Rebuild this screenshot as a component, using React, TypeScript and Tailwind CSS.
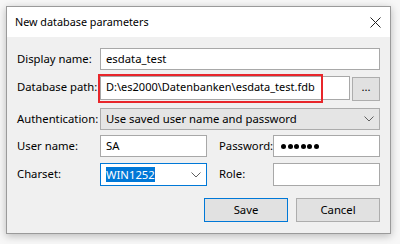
import React from "react";

const font = { fontFamily: '"Noto Sans", "Open Sans", sans-serif' };

function Chevron() {
  return (
    <svg width="10" height="6" viewBox="0 0 10 6" className="shrink-0">
      <path d="M0.5 0.5 L5 5 L9.5 0.5" fill="none" stroke="#606060" strokeWidth="1" />
    </svg>
  );
}

export default function App() {
  return (
    <div className="w-[400px] h-[244px] bg-[#f7f7f7] pt-[6px] pl-[6px] text-[11.3px] text-black whitespace-nowrap" style={font}>
      <div className="w-[385px] h-[228px] border border-[#9a9a9a] bg-[#f0f0f0] shadow-[0_2px_8px_rgba(0,0,0,0.25)] flex flex-col">
        <div className="h-[30px] bg-white flex items-center justify-between pl-[8px] pr-[9px]">
          <span className="leading-none text-[10.8px]">New database parameters</span>
          <svg width="11" height="11" viewBox="0 0 11 11">
            <path d="M0.5 0.5 L10.5 10.5 M10.5 0.5 L0.5 10.5" stroke="#222" strokeWidth="1" />
          </svg>
        </div>
        <div className="flex flex-col pl-[10px] pr-[10px]">
          {/* Display name */}
          <div className="mt-[11px] h-[22px] flex items-center">
            <span className="w-[83px] shrink-0">Display name:</span>
            <div className="flex-1 h-full border border-[#a8a8a8] bg-white flex items-center px-[5px]">esdata_test</div>
          </div>
          {/* Database path */}
          <div className="mt-[3px] h-[29px] flex items-center">
            <span className="w-[83px] shrink-0">Database path:</span>
            <div className="relative w-[250px] h-[24px] border border-[#a8a8a8] bg-white flex items-center px-[5px] text-[11px]">
              D:\es2000\Datenbanken\esdata_test.fdb
              <div className="absolute left-[-3px] top-[-3px] w-[225px] h-[29px] border-2 border-[#e8262b]" />
            </div>
            <div className="ml-[2px] mt-[3px] w-[28px] h-[24px] border border-[#adadad] bg-[#e1e1e1] flex items-center justify-center leading-none pb-[4px]">...</div>
          </div>
          {/* Authentication */}
          <div className="mt-[6px] h-[22px] flex items-center">
            <span className="w-[83px] shrink-0">Authentication:</span>
            <div className="flex-1 h-full border border-[#acacac] bg-[#e5e5e5] flex items-center justify-between pl-[5px] pr-[5px]">
              <span>Use saved user name and password</span>
              <Chevron />
            </div>
          </div>
          {/* User / Password */}
          <div className="mt-[5px] h-[22px] flex items-center">
            <span className="w-[83px] shrink-0">User name:</span>
            <div className="w-[107px] h-full border border-[#a8a8a8] bg-white flex items-center px-[5px]">SA</div>
            <span className="ml-[12px] w-[54px] shrink-0">Password:</span>
            <div className="flex-1 h-full border border-[#a8a8a8] bg-white flex items-center pl-[7px] gap-[1.5px]">
              {[0, 1, 2, 3, 4, 5].map((i) => (
                <span key={i} className="w-[5px] h-[5px] rounded-full bg-black" />
              ))}
            </div>
          </div>
          {/* Charset / Role */}
          <div className="mt-[6px] h-[23px] flex items-center">
            <span className="w-[83px] shrink-0">Charset:</span>
            <div className="w-[107px] h-full border border-[#0078d7] bg-white flex items-center justify-between pl-[5px] pr-[5px]">
              <span className="bg-[#0078d7] text-white leading-[15px]">WIN1252</span>
              <Chevron />
            </div>
            <span className="ml-[12px] w-[54px] shrink-0">Role:</span>
            <div className="flex-1 h-full border border-[#a8a8a8] bg-white" />
          </div>
          {/* Buttons */}
          <div className="mt-[12px] h-[24px] flex justify-end gap-[8px]">
            <div className="w-[84px] h-full border border-[#0078d7] bg-[#e1e1e1] flex items-center justify-center">Save</div>
            <div className="w-[84px] h-full border border-[#adadad] bg-[#e1e1e1] flex items-center justify-center">Cancel</div>
          </div>
        </div>
      </div>
    </div>
  );
}
